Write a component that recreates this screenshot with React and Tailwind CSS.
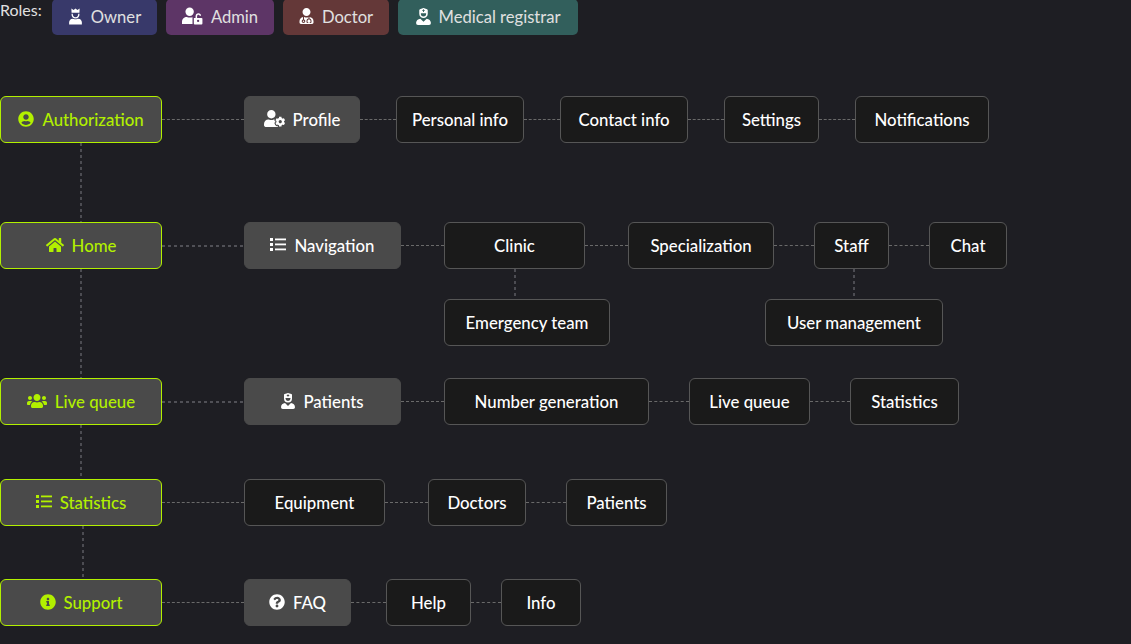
import React from "react";
import {
  FaUserCircle,
  FaHome,
  FaUsers,
  FaInfoCircle,
  FaQuestionCircle,
  FaUserCog,
  FaUserMd,
  FaUserNurse,
} from "react-icons/fa";

// FontAwesome has no free "user with crown" or "user with open lock"
const OwnerIcon = ({ className }) => (
  <svg viewBox="0 0 16 18" className={className} fill="currentColor">
    <path d="M3.6 0.4 L6 2 L8 0.4 L10 2 L12.4 0.4 L12.2 5 H3.8 Z" />
    <path fill="none" stroke="currentColor" strokeWidth="1.4" d="M4.4 6 C4.4 9 6 10.4 8 10.4 C10 10.4 11.6 9 11.6 6" />
    <path d="M1.2 17.6 V15.2 C1.2 13 3 11.6 4.8 11.4 C6 12 10 12 11.2 11.4 C13 11.6 14.8 13 14.8 15.2 V17.6 Z" />
  </svg>
);

const AdminIcon = ({ className }) => (
  <svg viewBox="0 0 22 18" className={className} fill="currentColor">
    <circle cx="8" cy="4.6" r="4.4" />
    <path d="M0 17.4 V15 C0 12 2.4 10 5 10 C6.8 10.8 9.2 10.8 11 10.2 V17.4 Z" />
    <path
      fillRule="evenodd"
      d="M12.4 11 H14.2 V9.4 C14.2 7.4 15.6 6.2 17.2 6.2 C18.8 6.2 20 7.4 20 8.8 H18.4 C18.4 8.2 17.9 7.8 17.2 7.8 C16.4 7.8 15.8 8.4 15.8 9.4 V11 H20.4 C21 11 21.4 11.4 21.4 12 V16.8 C21.4 17.4 21 17.8 20.4 17.8 H13.4 C12.8 17.8 12.4 17.4 12.4 16.8 Z M16.9 13 A1.2 1.2 0 1 0 16.9 15.4 A1.2 1.2 0 1 0 16.9 13 Z"
    />
  </svg>
);

// square bullets and thin lines, FaList is too heavy here
const ListIcon = ({ className }) => (
  <svg viewBox="0 0 16 13" className={className} fill="currentColor">
    <rect x="0" y="0" width="3" height="3" />
    <rect x="0" y="5" width="3" height="3" />
    <rect x="0" y="10" width="3" height="3" />
    <rect x="5" y="0.5" width="11" height="1.8" />
    <rect x="5" y="5.5" width="11" height="1.8" />
    <rect x="5" y="10.5" width="11" height="1.8" />
  </svg>
);

const Pill = ({ icon, className, children }) => (
  <div className={`flex h-9 items-center justify-center gap-2 rounded-[5px] text-[16.6px] text-[#e0e0e0] [&>svg]:-translate-y-px ${className}`}>
    {icon}
    <span>{children}</span>
  </div>
);

const Node = ({ className, icon, kind = "leaf", children }) => {
  const skin =
    kind === "root"
      ? "bg-[#4a4a4a] border border-[#b2f000] text-[#b2f000]"
      : kind === "group"
        ? "bg-[#4a4a4a] border border-[#4a4a4a] text-white"
        : "bg-[#1a1a1a] border border-[#565656] text-white";
  return (
    <div className={`flex h-[47px] shrink-0 items-center justify-center gap-2 rounded-[6px] text-[16.8px] font-medium [&>svg]:-translate-y-px ${skin} ${className}`}>
      {icon}
      <span>{children}</span>
    </div>
  );
};

const Dash = ({ className }) => (
  <div className={`shrink-0 border-t border-dashed border-[#6a6a6a] ${className}`} />
);

const ThickDash = ({ className }) => (
  <div className={`h-[2px] shrink-0 bg-[repeating-linear-gradient(to_right,#505056_0_3px,transparent_3px_6px)] ${className}`} />
);

const VDash = ({ className }) => (
  <div className={`w-[2px] bg-[repeating-linear-gradient(to_bottom,#4c4c52_0_3px,transparent_3px_6px)] ${className}`} />
);

const RootCell = ({ node, lineClass }) => (
  <div className="flex w-[162px] shrink-0 flex-col">
    {node}
    {lineClass && <VDash className={`flex-1 ${lineClass}`} />}
  </div>
);

export default function App() {
  const rootIcon = "h-[16px] w-[16px]";
  const groupIcon = "h-[16px] w-[16px]";

  return (
    <div className="h-screen overflow-hidden bg-[#1e1e23] font-['Lato',sans-serif]">
      {/* Roles */}
      <div className="-mt-px flex items-start">
        <span className="mt-px w-[52px] text-[16px] leading-[20px] text-[#e0e0e0]">Roles:</span>
        <div className="flex gap-[9px]">
          <Pill className="w-[105px] bg-[#38396a]" icon={<OwnerIcon className="h-[17px] w-[15px] text-white" />}>
            Owner
          </Pill>
          <Pill className="w-[108px] bg-[#5d3566]" icon={<AdminIcon className="h-[18px] w-[21px] text-white" />}>
            Admin
          </Pill>
          <Pill className="w-[106px] bg-[#643838]" icon={<FaUserMd className="h-[16px] w-[15px] text-white" />}>
            Doctor
          </Pill>
          <Pill className="w-[180px] bg-[#325f5c]" icon={<FaUserNurse className="h-[17px] w-[15px] text-white" />}>
            Medical registrar
          </Pill>
        </div>
      </div>

      <div className="mt-[61px] flex flex-col">
        {/* Authorization */}
        <div className="flex h-[126px]">
          <RootCell
            lineClass="ml-[80px]"
            node={
              <Node kind="root" className="w-[162px]" icon={<FaUserCircle className={rootIcon} />}>
                Authorization
              </Node>
            }
          />
          <div className="flex h-[47px] items-center">
            <Dash className="w-[82px]" />
            <Node kind="group" className="w-[116px]" icon={<FaUserCog className="h-[17px] w-[21px]" />}>
              Profile
            </Node>
            <Dash className="w-[36px]" />
            <Node className="w-[128px]">Personal info</Node>
            <Dash className="w-[36px]" />
            <Node className="w-[128px]">Contact info</Node>
            <Dash className="w-[36px]" />
            <Node className="w-[95px]">Settings</Node>
            <Dash className="w-[36px]" />
            <Node className="w-[134px]">Notifications</Node>
          </div>
        </div>

        {/* Home */}
        <div className="flex h-[156px]">
          <RootCell
            lineClass="ml-[80px]"
            node={
              <Node kind="root" className="w-[162px]" icon={<FaHome className="h-[16px] w-[18px]" />}>
                Home
              </Node>
            }
          />
          <div className="flex flex-col">
            <div className="flex h-[47px] items-center">
              <ThickDash className="w-[82px]" />
              <Node kind="group" className="w-[157px]" icon={<ListIcon className="h-[13px] w-[16px]" />}>
                Navigation
              </Node>
              <Dash className="w-[43px]" />
              <Node className="w-[141px]">Clinic</Node>
              <Dash className="w-[43px]" />
              <Node className="w-[146px]">Specialization</Node>
              <Dash className="w-[40px]" />
              <Node className="w-[75px]">Staff</Node>
              <Dash className="w-[40px]" />
              <Node className="w-[78px]">Chat</Node>
            </div>
            <div className="ml-[82px] flex h-[30px]">
              <VDash className="ml-[270px]" />
              <VDash className="ml-[337px]" />
            </div>
            <div className="ml-[282px] flex gap-[155px]">
              <Node className="w-[166px]">Emergency team</Node>
              <Node className="w-[178px]">User management</Node>
            </div>
          </div>
        </div>

        {/* Live queue */}
        <div className="flex h-[101px]">
          <RootCell
            lineClass="ml-[80px]"
            node={
              <Node kind="root" className="w-[162px]" icon={<FaUsers className="h-[16px] w-[20px]" />}>
                Live queue
              </Node>
            }
          />
          <div className="flex h-[47px] items-center">
            <ThickDash className="w-[82px]" />
            <Node kind="group" className="w-[157px]" icon={<FaUserNurse className="h-[16px] w-[14px]" />}>
              Patients
            </Node>
            <Dash className="w-[43px]" />
            <Node className="w-[205px]">Number generation</Node>
            <Dash className="w-[40px]" />
            <Node className="w-[121px]">Live queue</Node>
            <Dash className="w-[40px]" />
            <Node className="w-[109px]">Statistics</Node>
          </div>
        </div>

        {/* Statistics */}
        <div className="flex h-[100px]">
          <RootCell
            lineClass="ml-[82px]"
            node={
              <Node kind="root" className="w-[162px]" icon={<ListIcon className="h-[13px] w-[16px]" />}>
                Statistics
              </Node>
            }
          />
          <div className="flex h-[47px] items-center">
            <Dash className="w-[82px]" />
            <Node className="w-[141px]">Equipment</Node>
            <Dash className="w-[43px]" />
            <Node className="w-[98px]">Doctors</Node>
            <Dash className="w-[40px]" />
            <Node className="w-[101px]">Patients</Node>
          </div>
        </div>

        {/* Support */}
        <div className="flex">
          <RootCell
            node={
              <Node kind="root" className="w-[162px]" icon={<FaInfoCircle className={rootIcon} />}>
                Support
              </Node>
            }
          />
          <div className="flex h-[47px] items-center">
            <Dash className="w-[82px]" />
            <Node kind="group" className="w-[107px]" icon={<FaQuestionCircle className={groupIcon} />}>
              FAQ
            </Node>
            <Dash className="w-[35px]" />
            <Node className="w-[85px]">Help</Node>
            <Dash className="w-[30px]" />
            <Node className="w-[80px]">Info</Node>
          </div>
        </div>
      </div>
    </div>
  );
}
